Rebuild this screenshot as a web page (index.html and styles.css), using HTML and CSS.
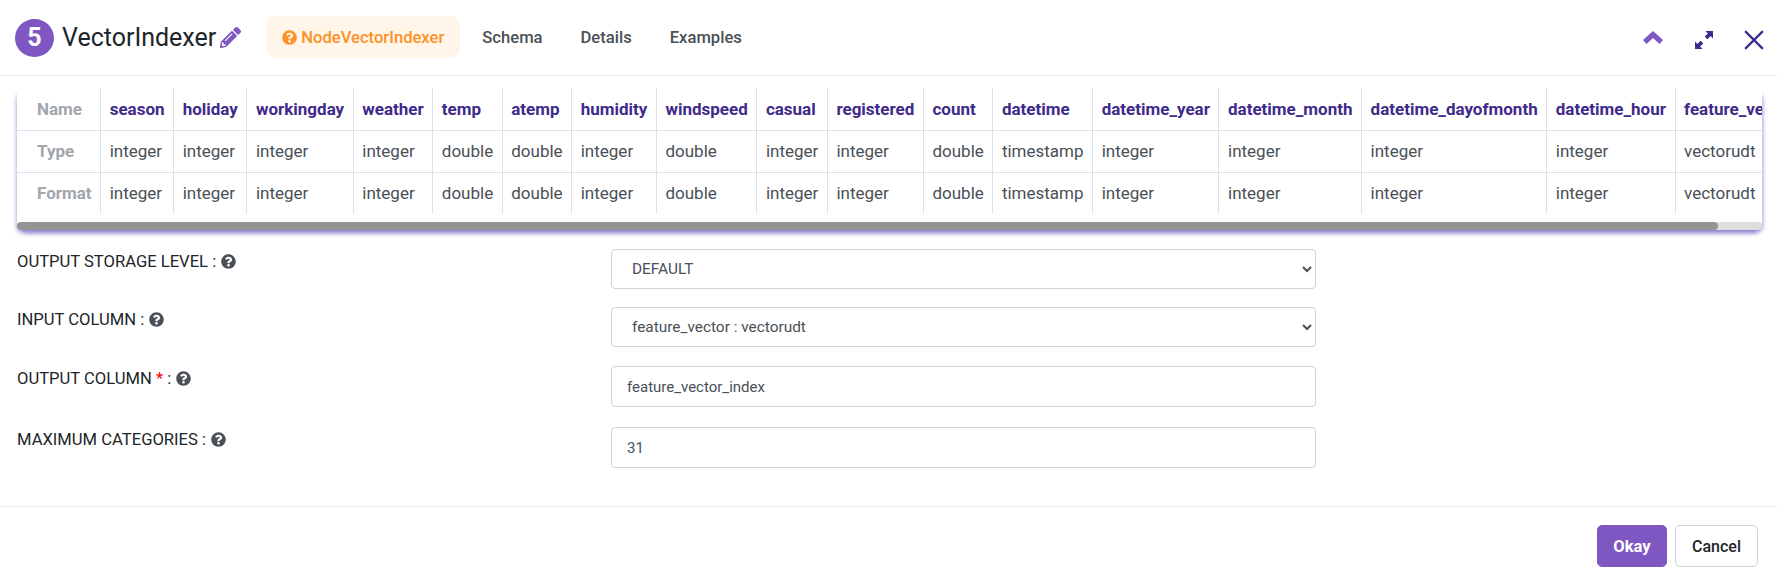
FILE: index.html
```html
<!DOCTYPE html>
<html lang="en">
<head>
    <meta charset="UTF-8">
    <title>VectorIndexer</title>
    <link rel="stylesheet" href="styles.css">
</head>
<body>
    <svg class="sprites" width="0" height="0">
        <symbol id="help" viewBox="0 0 512 512"><path d="M504 256c0 136.997-111.043 248-248 248S8 392.997 8 256C8 119.083 119.043 8 256 8s248 111.083 248 248zM262.655 90c-54.497 0-89.255 22.957-116.549 63.758-3.536 5.286-2.353 12.415 2.715 16.258l34.699 26.31c5.205 3.947 12.621 3.008 16.665-2.122 17.864-22.658 30.113-35.797 57.303-35.797 20.429 0 45.698 13.148 45.698 32.958 0 14.976-12.363 22.667-32.534 33.976C247.128 238.528 216 254.941 216 296v4c0 6.627 5.373 12 12 12h56c6.627 0 12-5.373 12-12v-1.333c0-28.462 83.186-29.647 83.186-106.667 0-58.002-60.165-102-116.531-102zM256 338c-25.365 0-46 20.635-46 46 0 25.364 20.635 46 46 46s46-20.636 46-46c0-25.365-20.635-46-46-46z"/></symbol>
    </svg>
    <div class="modal">
        <header class="modal-head">
            <span class="step">5</span>
            <h1 class="title">VectorIndexer</h1>
            <svg class="edit" viewBox="0 0 512 512"><path d="M497.9 142.1l-46.1 46.1c-4.7 4.7-12.3 4.7-17 0l-111-111c-4.7-4.7-4.7-12.3 0-17l46.1-46.1c18.7-18.7 49.1-18.7 67.9 0l60.1 60.1c18.8 18.7 18.8 49.1 0 67.9zM284.2 99.8L21.6 362.4.4 483.9c-2.9 16.4 11.4 30.6 27.8 27.8l121.5-21.3 262.6-262.6c4.7-4.7 4.7-12.3 0-17l-111-111c-4.8-4.7-12.4-4.7-17.1 0zM124.1 339.9c-5.5-5.5-5.5-14.3 0-19.8l154-154c5.5-5.5 14.3-5.5 19.8 0s5.5 14.3 0 19.8l-154 154c-5.5 5.5-14.3 5.5-19.8 0zM88 424h48v36.3l-64.5 11.3-31.1-31.1L51.7 376H88v48z"/></svg>
            <nav class="tabs">
                <a class="tab active"><svg class="tab-icon"><use href="#help"/></svg>NodeVectorIndexer</a>
                <a class="tab">Schema</a>
                <a class="tab">Details</a>
                <a class="tab">Examples</a>
            </nav>
            <div class="head-actions">
                <svg class="ico-up" viewBox="0 0 20 13"><path d="M10 0l10 9-3.500 4L10 7l-6.500 6L0 9z"/></svg>
                <svg class="ico-expand" viewBox="0 0 18 18"><path d="M18 0v7.500l-2.400-2.400-3.200 3.200-2.700-2.700 3.200-3.200L10.500 0zM0 18v-7.500l2.400 2.400 3.200-3.200 2.700 2.700-3.200 3.200 2.400 2.400z"/></svg>
                <svg class="ico-close" viewBox="0 0 18 18"><path d="M1 1l16 16M17 1L1 17"/></svg>
            </div>
        </header>

        <main class="modal-body">
            <div class="schema-wrap">
                <div class="schema-scroll">
                    <table class="schema">
                        <tr>
                            <th>Name</th><th>season</th><th>holiday</th><th>workingday</th><th>weather</th><th>temp</th><th>atemp</th><th>humidity</th><th>windspeed</th><th>casual</th><th>registered</th><th>count</th><th>datetime</th><th>datetime_year</th><th>datetime_month</th><th>datetime_dayofmonth</th><th>datetime_hour</th><th>feature_vector</th>
                        </tr>
                        <tr>
                            <th>Type</th><td>integer</td><td>integer</td><td>integer</td><td>integer</td><td>double</td><td>double</td><td>integer</td><td>double</td><td>integer</td><td>integer</td><td>double</td><td>timestamp</td><td>integer</td><td>integer</td><td>integer</td><td>integer</td><td>vectorudt</td>
                        </tr>
                        <tr>
                            <th>Format</th><td>integer</td><td>integer</td><td>integer</td><td>integer</td><td>double</td><td>double</td><td>integer</td><td>double</td><td>integer</td><td>integer</td><td>double</td><td>timestamp</td><td>integer</td><td>integer</td><td>integer</td><td>integer</td><td>vectorudt</td>
                        </tr>
                    </table>
                </div>
                <div class="scrollbar"><div class="scrollbar-thumb" style="width: 97.5%"></div></div>
            </div>

            <form class="fields">
                <div class="field field-select">
                    <label>OUTPUT STORAGE LEVEL : <svg class="help"><use href="#help"/></svg></label>
                    <select class="control"><option>DEFAULT</option></select>
                </div>
                <div class="field field-select field-last-select">
                    <label>INPUT COLUMN : <svg class="help"><use href="#help"/></svg></label>
                    <select class="control"><option>feature_vector : vectorudt</option></select>
                </div>
                <div class="field field-input">
                    <label>OUTPUT COLUMN <span class="req">*</span> : <svg class="help"><use href="#help"/></svg></label>
                    <input class="control" type="text" value="feature_vector_index">
                </div>
                <div class="field field-input">
                    <label>MAXIMUM CATEGORIES : <svg class="help"><use href="#help"/></svg></label>
                    <input class="control" type="text" value="31">
                </div>
            </form>
        </main>

        <footer class="modal-foot">
            <button class="btn btn-primary" type="button">Okay</button>
            <button class="btn btn-light" type="button">Cancel</button>
        </footer>
    </div>
</body>
</html>
```

FILE: styles.css
```css
* { box-sizing: border-box; }
html, body { margin: 0; padding: 0; background: #fff; }
body { font-family: Roboto, "Liberation Sans", sans-serif; font-size: 16px; color: #212529; overflow: hidden; }
.sprites { position: absolute; }

.modal { height: 577px; display: flex; flex-direction: column; }

.modal-head { height: 76px; flex: none; display: flex; align-items: center; padding: 0 13px 0 15px; border-bottom: 1px solid #e9ecef; }
.step { width: 39px; height: 38px; border-radius: 50%; background: #7e57c2; color: #fff; font-size: 25px; font-weight: 700; display: flex; align-items: center; justify-content: center; }
.title { margin: 0 0 0 8px; font-size: 25px; font-weight: 400; line-height: 1; color: #212529; }
.edit { width: 21px; height: 21px; margin-left: 4px; fill: #7e57c2; }

.tabs { display: flex; align-items: center; margin-left: 25px; margin-top: -2px; }
.tab { height: 42px; display: flex; align-items: center; padding: 1px 16px 0; margin-right: 6px; font-size: 16.6px; font-weight: 500; color: #495057; border-radius: 10px; }
.tab.active { background: #fff5e9; color: #fd9127; }
.tab-icon { width: 15px; height: 15px; margin-right: 4px; fill: #fd9127; }

.head-actions { margin-left: auto; display: flex; align-items: center; padding-top: 4px; }
.ico-up { width: 20px; height: 13px; margin-top: -5px; fill: #7e57c2; }
.ico-expand { width: 18px; height: 18px; margin-left: 32px; fill: #3f2a8c; }
.ico-close { width: 20px; height: 20px; margin-left: 31px; stroke: #3f2a8c; stroke-width: 2; fill: none; }

.modal-body { flex: 1; padding: 12px 15px 0 17px; }

.schema-wrap { border-radius: 8px; box-shadow: 2px 4px 4px -1px rgba(94, 70, 190, .5), -2px 4px 4px -1px rgba(94, 70, 190, .4); }
.schema-scroll { overflow: hidden; background: #fff; }
.scrollbar { height: 8px; background: #dedede; border-radius: 4px; }
.scrollbar-thumb { height: 8px; background: #949494; border-radius: 4px; }
.schema { border-collapse: collapse; margin-bottom: 8px; white-space: nowrap; font-size: 17px; }
.schema th, .schema td { height: 42px; padding: 0 8.55px; text-align: left; border: 1px solid #e0e0e8; }
.schema tr:first-child th, .schema tr:first-child td { border-top: 0; }
.schema tr:last-child th, .schema tr:last-child td { border-bottom: 0; }
.schema th:first-child { border-left: 0; padding-left: 20px; color: #a0a6ab; font-weight: 700; }
.schema th:last-child, .schema td:last-child { border-right: 0; }
.schema th { font-weight: 700; color: #3f2a8c; }
.schema td { font-weight: 400; color: #495057; }

.fields { margin-top: 19px; }
.field { display: grid; grid-template-columns: 594px 705px; }
.field label { font-size: 16.6px; color: #212529; padding-top: 3px; }
.field-select { margin-bottom: 18px; }
.field-last-select { margin-bottom: 19px; }
.field-input { margin-bottom: 20px; }
.req { color: #f00; }
.help { width: 15px; height: 15px; fill: #495057; vertical-align: -2px; margin-left: 1px; }

.control { width: 100%; font: 15.4px Roboto, "Liberation Sans", sans-serif; color: #495057; background: #fff; border: 1px solid #ced4da; border-radius: 4px; outline: 0; }
select.control { height: 40px; padding: 0 16px; }
input.control { height: 41px; padding: 0 15px; font-size: 15px; }

.modal-foot { height: 71px; flex: none; display: flex; justify-content: flex-end; gap: 8px; padding: 18px 19px 0 0; border-top: 1px solid #e9ecef; }
.btn { height: 42px; font: 500 16px Roboto, "Liberation Sans", sans-serif; border-radius: 5px; padding: 0; }
.btn-primary { width: 70px; background: #7e57c2; border: 1px solid #7e57c2; color: #fff; font-size: 16.6px; font-weight: 700; }
.btn-light { width: 83px; background: #fff; border: 1px solid #ced4da; color: #212529; }
```
